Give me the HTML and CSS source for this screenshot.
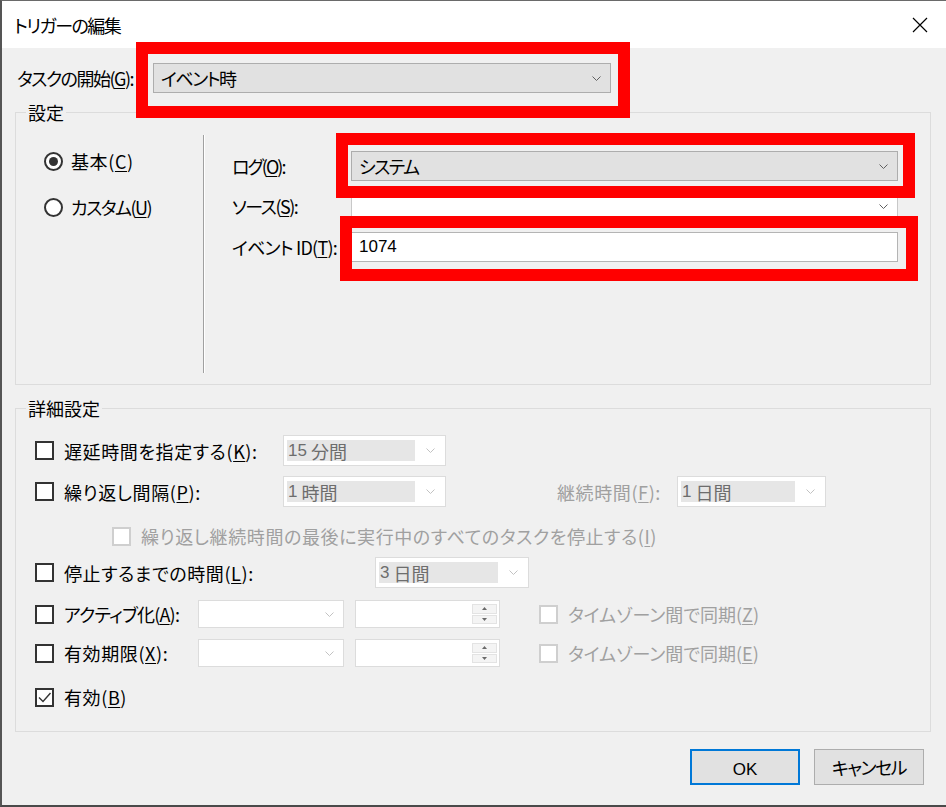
FILE: index.html
```html
<!DOCTYPE html>
<html lang="ja">
<head>
<meta charset="utf-8">
<title>トリガーの編集</title>
<link rel="stylesheet" href="styles.css">
</head>
<body>
<div class="window">
  <div class="titlebar">
    <span class="title kt">トリガーの編集</span>
    <svg class="close" width="16" height="16" viewBox="0 0 16 16"><path d="M1 1 L15 15 M15 1 L1 15" stroke="#000" stroke-width="1.2" fill="none"/></svg>
  </div>

  <div class="start-row">
    <span class="start-label kt">タスクの開始(<u>G</u>):</span>
    <div class="combo combo-gray combo-start">
      <span class="kt">イベント時</span>
      <svg class="chev" width="9" height="5" viewBox="0 0 9 5"><path d="M0.5 0.5 L4.5 4.5 L8.5 0.5" fill="none" stroke="currentColor"/></svg>
    </div>
  </div>

  <fieldset class="group group-settings">
    <legend>設定</legend>
    <div class="settings-inner">
      <div class="radios">
        <div class="radio-row"><span class="radio radio-on"></span><span class="wd">基本(<u>C</u>)</span></div>
        <div class="radio-row radio-row-2"><span class="radio"></span><span class="kt">カスタム(<u>U</u>)</span></div>
      </div>
      <div class="sep"></div>
      <div class="fields">
        <div class="frow">
          <span class="flabel kt2">ログ(<u>O</u>):</span>
          <div class="combo combo-gray combo-wide">
            <span class="kt">システム</span>
            <svg class="chev" width="9" height="5" viewBox="0 0 9 5"><path d="M0.5 0.5 L4.5 4.5 L8.5 0.5" fill="none" stroke="currentColor"/></svg>
          </div>
        </div>
        <div class="frow frow-src">
          <span class="flabel kt">ソース(<u>S</u>):</span>
          <div class="combo combo-white combo-wide">
            <span></span>
            <svg class="chev" width="9" height="5" viewBox="0 0 9 5"><path d="M0.5 0.5 L4.5 4.5 L8.5 0.5" fill="none" stroke="currentColor"/></svg>
          </div>
        </div>
        <div class="frow frow-id">
          <span class="flabel kt1">イベント ID(<u>T</u>):</span>
          <div class="edit combo-wide"><span class="latin">1074</span></div>
        </div>
      </div>
    </div>
  </fieldset>

  <fieldset class="group group-adv">
    <legend>詳細設定</legend>
    <div class="adv">
      <div class="arow arow-1">
        <div class="lead lead-283"><span class="cb"></span><span class="wd">遅延時間を指定する(<u>K</u>):</span></div>
        <div class="dcombo dcombo-163"><span class="val"><span class="latin">15</span>&nbsp;分間</span><span class="dchev"><svg width="9" height="5" viewBox="0 0 9 5"><path d="M0.5 0.5 L4.5 4.5 L8.5 0.5" fill="none" stroke="currentColor"/></svg></span></div>
      </div>
      <div class="arow arow-2">
        <div class="lead lead-283"><span class="cb"></span><span class="wd">繰り返し間隔(<u>P</u>):</span></div>
        <div class="dcombo dcombo-163"><span class="val"><span class="latin">1</span>&nbsp;時間</span><span class="dchev"><svg width="9" height="5" viewBox="0 0 9 5"><path d="M0.5 0.5 L4.5 4.5 L8.5 0.5" fill="none" stroke="currentColor"/></svg></span></div>
        <span class="dur-label disabled wd">継続時間(<u>F</u>):</span>
        <div class="dcombo dcombo-149"><span class="val"><span class="latin">1</span>&nbsp;日間</span><span class="dchev"><svg width="9" height="5" viewBox="0 0 9 5"><path d="M0.5 0.5 L4.5 4.5 L8.5 0.5" fill="none" stroke="currentColor"/></svg></span></div>
      </div>
      <div class="arow arow-3">
        <span class="cb cb-off"></span><span class="disabled wd">繰り返し継続時間の最後に実行中のすべてのタスクを停止する(<u>I</u>)</span>
      </div>
      <div class="arow arow-4">
        <div class="lead lead-375"><span class="cb"></span><span class="wd">停止するまでの時間(<u>L</u>):</span></div>
        <div class="dcombo dcombo-154"><span class="val"><span class="latin">3</span>&nbsp;日間</span><span class="dchev"><svg width="9" height="5" viewBox="0 0 9 5"><path d="M0.5 0.5 L4.5 4.5 L8.5 0.5" fill="none" stroke="currentColor"/></svg></span></div>
      </div>
      <div class="arow arow-5">
        <div class="lead lead-198"><span class="cb"></span><span class="kt1">アクティブ化(<u>A</u>):</span></div>
        <div class="date"><svg width="9" height="5" viewBox="0 0 9 5"><path d="M0.5 0.5 L4.5 4.5 L8.5 0.5" fill="none" stroke="currentColor"/></svg></div>
        <div class="spin"><div class="spin-btns"><span class="sb"><svg width="5" height="3" viewBox="0 0 5 3"><path d="M0 3 L2.5 0 L5 3 Z" fill="currentColor"/></svg></span><span class="sb"><svg width="5" height="3" viewBox="0 0 5 3"><path d="M0 0 L2.5 3 L5 0 Z" fill="currentColor"/></svg></span></div></div>
        <span class="cb cb-off cb-tz"></span><span class="disabled">タイムゾーン間で同期(<u>Z</u>)</span>
      </div>
      <div class="arow arow-6">
        <div class="lead lead-198"><span class="cb"></span><span class="wd">有効期限(<u>X</u>):</span></div>
        <div class="date"><svg width="9" height="5" viewBox="0 0 9 5"><path d="M0.5 0.5 L4.5 4.5 L8.5 0.5" fill="none" stroke="currentColor"/></svg></div>
        <div class="spin"><div class="spin-btns"><span class="sb"><svg width="5" height="3" viewBox="0 0 5 3"><path d="M0 3 L2.5 0 L5 3 Z" fill="currentColor"/></svg></span><span class="sb"><svg width="5" height="3" viewBox="0 0 5 3"><path d="M0 0 L2.5 3 L5 0 Z" fill="currentColor"/></svg></span></div></div>
        <span class="cb cb-off cb-tz"></span><span class="disabled">タイムゾーン間で同期(<u>E</u>)</span>
      </div>
      <div class="arow arow-7">
        <span class="cb cb-checked"><svg width="15" height="15" viewBox="0 0 15 15"><path d="M2 7.5 L6 11.5 L13.5 3" fill="none" stroke="#333" stroke-width="1.4"/></svg></span><span class="wd">有効(<u>B</u>)</span>
      </div>
    </div>
  </fieldset>

  <div class="buttons">
    <button class="btn btn-default"><span class="latin">OK</span></button>
    <button class="btn"><span class="kt">キャンセル</span></button>
  </div>

  <div class="mark mark-start"></div>
  <div class="mark mark-log"></div>
  <div class="mark mark-id"></div>
</div>
</body>
</html>
```

FILE: styles.css
```css
* { box-sizing: border-box; }
html, body { margin: 0; padding: 0; }
body {
  width: 946px;
  height: 807px;
  overflow: hidden;
  background: #f0f0f0;
  font-family: "Noto Sans CJK JP", "Noto Sans", sans-serif;
  font-size: 18px;
  line-height: 22px;
  font-feature-settings: "palt";
  color: #000;
}
u { text-decoration: underline; text-decoration-thickness: 1px; text-underline-offset: 2px; }
.latin { font-family: "Liberation Sans", "Noto Sans", sans-serif; font-size: 17px; letter-spacing: 0; }
.kt { letter-spacing: -1.5px; }
.kt1 { letter-spacing: -0.8px; }
.kt2 { letter-spacing: -2px; }
.wd { letter-spacing: 0.6px; }

.window {
  position: relative;
  width: 946px;
  height: 807px;
  background: #f0f0f0;
  border-left: 2px solid #555;
  border-top: 1px solid #6a6a6a;
  border-bottom: 2px solid #4a4a4a;
}

.titlebar {
  height: 47px;
  background: #fff;
  display: flex;
  align-items: center;
  justify-content: space-between;
  padding: 0 18px 0 12px;
}
.title { font-size: 18px; }

.start-row {
  display: flex;
  align-items: center;
  margin-top: 15px;
  padding-left: 15px;
  height: 30px;
}
.start-label { width: 136px; flex: none; white-space: nowrap; }

.combo {
  display: flex;
  align-items: center;
  height: 30px;
  border: 1px solid #adadad;
  padding-left: 7px;
  color: #000;
}
.combo-gray { background: #e1e1e1; }
.combo-white { background: #fff; border-color: #c8c8c8; }
.combo .chev { margin-left: auto; margin-right: 9px; color: #606060; }
.combo-start { width: 458px; }
.combo-wide { width: 547px; }

.edit {
  display: flex;
  align-items: center;
  height: 30px;
  background: #fff;
  border: 1px solid #b4b4b4;
  padding-left: 7px;
}

.group {
  margin: 9px 0 0 13px;
  width: 916px;
  padding: 0;
  border: 1px solid #dcdcdc;
  min-width: 0;
}
.group legend {
  margin-left: 10px;
  padding: 0 2px;
  line-height: 20px;
  font-size: 18px;
}
.group-adv { margin-top: 13px; }

.settings-inner { display: flex; height: 262px; }
.radios { width: 187px; padding: 28px 0 0 28px; }
.radio-row { display: flex; align-items: center; gap: 8px; height: 22px; }
.radio-row-2 { margin-top: 24px; }
.radio {
  width: 19px; height: 19px;
  border: 2px solid #333;
  border-radius: 50%;
  background: #fff;
  display: flex; align-items: center; justify-content: center;
}
.radio-on::after {
  content: "";
  width: 9px; height: 9px;
  border-radius: 50%;
  background: #333;
}
.sep {
  width: 2px;
  margin-top: 13px;
  height: 238px;
  border-left: 1px solid #a0a0a0;
  border-right: 1px solid #fff;
}
.fields { margin-left: 27px; padding-top: 29px; }
.frow { display: flex; align-items: center; height: 30px; }
.frow-src { margin-top: 10px; }
.frow-id { margin-top: 11px; }
.flabel { width: 119px; white-space: nowrap; }

.adv { padding: 17px 0 20px 19px; }
.arow { display: flex; align-items: center; white-space: nowrap; }
.arow-1 { height: 31px; }
.arow-2 { height: 31px; margin-top: 10px; }
.arow-3 { height: 28px; margin-top: 15px; padding-left: 77px; }
.arow-4 { height: 31px; margin-top: 7px; }
.arow-5 { height: 28px; margin-top: 12px; }
.arow-6 { height: 28px; margin-top: 11px; }
.arow-7 { height: 28px; margin-top: 16px; }

.lead { display: flex; align-items: center; }
.lead-283 { width: 248px; }
.lead-375 { width: 340px; }
.lead-198 { width: 163px; }

.cb {
  width: 19px; height: 19px;
  border: 2px solid #333;
  background: #fff;
  margin-right: 10px;
  flex: none;
  display: flex; align-items: center; justify-content: center;
}
.cb-off { border-color: #cfcfcf; }
.cb-tz { margin-left: 39px; }
.disabled { color: #a0a0a0; }

.dcombo {
  display: flex;
  align-items: stretch;
  height: 31px;
  background: #fff;
  border: 1px solid #dcdcdc;
  padding: 4px 0 4px 3px;
}
.dcombo .val {
  flex: 1;
  display: flex;
  align-items: center;
  background: #e6e6e6;
  color: #6d6d6d;
  padding-left: 1px;
}
.dcombo .dchev {
  width: 30px;
  display: flex; align-items: center; justify-content: center;
  color: #c2c2c2;
}
.dcombo-163 { width: 163px; }
.dcombo-149 { width: 149px; }
.dcombo-154 { width: 154px; }
.dur-label { margin-left: 111px; width: 120px; }

.date {
  width: 146px; height: 28px;
  background: #fff;
  border: 1px solid #dcdcdc;
  display: flex; align-items: center; justify-content: flex-end;
  padding-right: 9px;
  color: #c2c2c2;
}
.spin {
  width: 145px; height: 28px;
  margin-left: 11px;
  background: #fff;
  border: 1px solid #dcdcdc;
  display: flex; justify-content: flex-end;
  padding: 3px 2px 3px 0;
}
.spin-btns { display: flex; flex-direction: column; width: 25px; gap: 1px; }
.sb {
  flex: 1;
  background: #f4f4f4;
  border: 1px solid #e3e3e3;
  display: flex; align-items: center; justify-content: center;
  color: #6a6a6a;
}

.buttons {
  display: flex;
  justify-content: flex-end;
  gap: 14px;
  margin-top: 17px;
  padding-right: 22px;
}
.btn {
  width: 110px; height: 36px;
  background: #e1e1e1;
  border: 1px solid #adadad;
  font-family: inherit;
  font-size: 18px;
  font-feature-settings: "palt";
  color: #000;
  padding: 0;
}
.btn-default { border: 2px solid #0078d7; }

.mark { position: absolute; border: 12px solid #ff0000; }
.mark-start { left: 134px; top: 41px; width: 494px; height: 76px; }
.mark-log { left: 334px; top: 132px; width: 579px; height: 65px; }
.mark-id { left: 338px; top: 215px; width: 578px; height: 65px; }
```
